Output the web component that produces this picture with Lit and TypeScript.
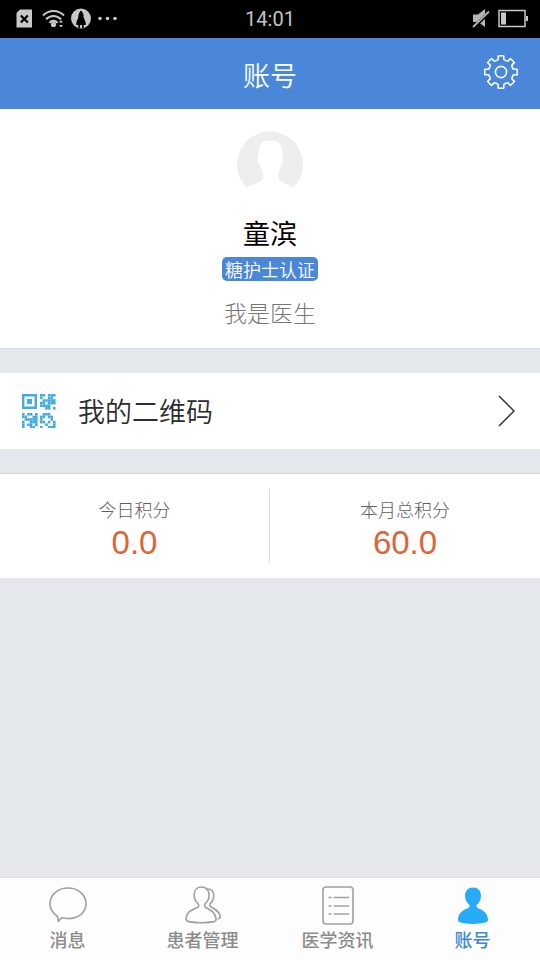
import { LitElement, html, css, svg } from "lit";
import { customElement, property } from "lit/decorators.js";
import { classMap } from "lit/directives/class-map.js";

function gearPath(cx: number, cy: number, teeth: number, outer: number, inner: number): string {
  const step = (Math.PI * 2) / teeth;
  const at = (r: number, a: number) =>
    `${(cx + r * Math.sin(a)).toFixed(2)} ${(cy - r * Math.cos(a)).toFixed(2)}`;
  let d = "";
  for (let i = 0; i < teeth; i++) {
    const a = i * step;
    d += `${i === 0 ? "M" : "L"}${at(inner, a - step * 0.28)}`;
    d += `L${at(outer, a - step * 0.22)}`;
    d += `A${outer} ${outer} 0 0 1 ${at(outer, a + step * 0.22)}`;
    d += `L${at(inner, a + step * 0.28)}`;
    d += `Q${at(inner - 1, a + step * 0.5)} ${at(inner, a + step * 0.72)}`;
  }
  return d + "Z";
}

const QR_BLOCKS = [
  { x: 18, y: 0, rows: ["11.111", "1..11.", ".11111", "11.111", "1111..", "..11.1"] },
  { x: 0, y: 19, rows: ["1.11.1", "11..11", ".11111", "1..111", "1.11.1", "1..11."] },
  { x: 18, y: 19, rows: [".111..", "11.11.", "1...1.", "11.1.1", "..1..1", "1..111"] },
];
const QR_CELL = 2.6;

const icons = {
  chat: svg`<path d="M8.5 30.500C4 27.500 1 22.800 1 17.800 1 8.800 8.800 2 19 2s18 6.800 18 15.800S29.200 32.500 19 32.500c-2.500 0-4.500-.3-6.300-.8L9.300 35.500Z"/>`,
  people: svg`<path d="M17.500 1c-4.500 0-7.300 3.200-7.300 7.800 0 4 1.500 7 3.800 8.800 1 .9 1 2.900-.2 3.600C8 24 2.500 25.500 2 32.500c-.1 1.800 1.200 2.700 3 3.100 7.500 1.400 17.500 1.400 25 0 1.800-.4 2.400-1.300 2-3.100-1.200-7-6-8.500-10.500-11.300-1.200-.7-1.200-2.700-.2-3.600 2.300-1.800 3.800-4.800 3.800-8.800C25.100 4.200 22 1 17.500 1Z"/><path d="M23.500 3c4 0 6.200 2.500 6.200 6.500 0 3.500-1.200 6-3.200 7.800-1 1-1 2.600.2 3.400 4.500 2.500 8.800 4.500 9.500 9.500.2 1.400-.6 2.300-2 2.500"/>`,
  list: svg`<rect x="4" y="1" width="30" height="37" rx="3"/><path d="M15.500 11.500h14M15.500 20h14M15.500 28h14M10 11.500h2M10 20h2M10 28h2"/>`,
  person: svg`<path class="solid" d="M19 1.500c-5 0-8 3.500-8 8.200 0 3.800 1.700 7 4 8.800.9.800.8 2.600-.3 3.200C9 24 4.500 26.500 4 33.500c0 1.500.6 2.400 2 2.800 7.500 2.200 18.500 2.200 26 0 1.400-.4 2-1.300 2-2.800-.5-7-5-9.500-10.700-11.800-1.100-.6-1.200-2.400-.3-3.200 2.300-1.800 4-5 4-8.800 0-4.700-3-8.200-8-8.200Z"/>`,
};

@customElement("status-bar")
class StatusBar extends LitElement {
  static styles = css`
    :host {
      display: grid;
      grid-template-columns: 1fr auto 1fr;
      align-items: center;
      height: 38px;
      background: #000;
      color: #c4c4c4;
      font: 20px/24px Roboto, sans-serif;
    }
    .left,
    .right {
      display: flex;
      align-items: center;
    }
    .left {
      padding-left: 16px;
    }
    .right {
      justify-content: flex-end;
      padding-right: 12px;
    }
    svg {
      display: block;
    }
  `;
  render() {
    return html`
      <div class="left">
        <svg width="104" height="24" viewBox="0 0 104 24" fill="none">
          <path d="M4 2.500h12v18H.5V6Z" fill="#c8c8c8" />
          <path d="m4.800 8.500 7 7m0-7-7 7" stroke="#000" stroke-width="2.200" />
          <g stroke="#c8c8c8" stroke-width="2">
            <path d="M27 8.500c6-6 15-6 21 0M30 12.300c4.500-4.400 10.500-4.400 15 0M33.300 15.800c2.500-2.300 5.800-2.300 8.300 0" />
          </g>
          <circle cx="37.500" cy="17.500" r="2.600" fill="#c8c8c8" />
          <path d="m45 13 2 2.500h-4ZM45 20.500l2-2.500h-4Z" fill="#c8c8c8" />
          <circle cx="65" cy="11.500" r="10" fill="#c8c8c8" />
          <path d="M65 3.500c2 2 2.800 4.300 2.700 7l2 5v2.500h-2v3h-1.700v-3h-2v3h-1.700v-3h-2V15.500l2-5c-.1-2.700.7-5 2.700-7Z" fill="#000" />
          <g fill="#c8c8c8">
            <circle cx="84" cy="11.500" r="1.800" />
            <circle cx="91.500" cy="11.500" r="1.800" />
            <circle cx="99" cy="11.500" r="1.800" />
          </g>
        </svg>
      </div>
      <time>14:01</time>
      <div class="right">
        <svg width="56" height="24" viewBox="0 0 56 24" fill="none">
          <path d="M1 7.500h5L13 2v18l-7-5H1Z" fill="#b4b4b4" />
          <path d="M1.500 20.500 17 5.500" stroke="#000" stroke-width="3.500" />
          <path d="M1 20 17 4.500" stroke="#b4b4b4" stroke-width="1.800" />
          <rect x="27" y="3.500" width="26" height="16" stroke="#c8c8c8" stroke-width="1.500" />
          <path d="M29 5.500h5v12h-5Z" fill="#c8c8c8" />
          <path d="M54 9h2v5h-2Z" fill="#c8c8c8" />
        </svg>
      </div>
    `;
  }
}

@customElement("tab-bar")
class TabBar extends LitElement {
  @property() current = "账号";

  static styles = css`
    :host {
      display: block;
      background: #fdfdfd;
      border-top: 1px solid #dcdfe2;
    }
    nav {
      display: grid;
      grid-template-columns: repeat(4, 1fr);
    }
    a {
      display: flex;
      flex-direction: column;
      align-items: center;
      padding: 8px 0;
      color: #8c8c8c;
      font-size: 18px;
      font-weight: 500;
      line-height: 26px;
      text-decoration: none;
    }
    a.active {
      color: #3f87cf;
    }
    svg {
      display: block;
      fill: none;
      stroke: #a0a0a0;
      stroke-width: 1.600;
      stroke-linecap: round;
      stroke-linejoin: round;
    }
    .solid {
      fill: #27abf8;
      stroke: none;
    }
  `;
  render() {
    const tabs = [
      { label: "消息", icon: icons.chat },
      { label: "患者管理", icon: icons.people },
      { label: "医学资讯", icon: icons.list },
      { label: "账号", icon: icons.person },
    ];
    return html`<nav>
      ${tabs.map(
        (t) => html`<a href="#" class=${classMap({ active: t.label === this.current })}>
          <svg width="38" height="40" viewBox="0 0 38 40" aria-hidden="true">${t.icon}</svg>
          <span>${t.label}</span>
        </a>`
      )}
    </nav>`;
  }
}

@customElement("app-root")
class AppRoot extends LitElement {
  static styles = css`
    :host {
      display: flex;
      flex-direction: column;
      min-height: 100vh;
      background: #e4e8ec;
      color: #2c2c2c;
      font-family: "Noto Sans CJK SC", sans-serif;
    }
    svg {
      display: block;
    }
    h1,
    h2,
    p,
    dl,
    dd {
      margin: 0;
      font-weight: 400;
    }
    header {
      display: grid;
      grid-template-columns: 1fr auto 1fr;
      align-items: center;
      height: 71px;
      background: #4a87d8;
      color: #fff;
    }
    h1 {
      grid-column: 2;
      padding-top: 2px;
      font-size: 27px;
      font-weight: 350;
      line-height: 40px;
    }
    button {
      border: 0;
      padding: 0;
      background: none;
      color: inherit;
      font: inherit;
      cursor: pointer;
    }
    .settings {
      justify-self: end;
      margin-right: 20px;
      padding-bottom: 3px;
    }
    main {
      flex: 1;
      display: flex;
      flex-direction: column;
      gap: 24px;
    }
    .profile {
      display: flex;
      flex-direction: column;
      align-items: center;
      padding: 20px 0;
      background: #fff;
      border-bottom: 1px solid #d6d9dc;
    }
    h2 {
      margin-top: 16px;
      font-size: 27px;
      line-height: 40px;
      color: #000;
    }
    .badge {
      margin-top: 4px;
      padding: 0 3px;
      border-radius: 5px;
      background: #4a87d8;
      color: #fff;
      font-size: 18px;
      font-weight: 350;
      line-height: 24px;
    }
    .role {
      margin-top: 15px;
      font-size: 23px;
      font-weight: 300;
      line-height: 32px;
      color: #787878;
    }
    .qr {
      display: flex;
      align-items: center;
      gap: 22px;
      width: 100%;
      padding: 18px 24px 18px 22px;
      background: #fff;
      font-size: 27px;
      font-weight: 350;
      line-height: 40px;
      text-align: left;
    }
    .qr span {
      flex: 1;
    }
    .points {
      display: grid;
      grid-template-columns: 1fr 1fr;
      padding: 15px 0;
      background: #fff;
      border-top: 1px solid #d6d9dc;
    }
    .points div {
      display: flex;
      flex-direction: column;
      align-items: center;
      padding-top: 7px;
    }
    .points div:first-child {
      border-right: 1px solid #dcdcdc;
    }
    dt {
      font-size: 18px;
      font-weight: 300;
      line-height: 26px;
      color: #606060;
    }
    dd {
      padding-top: 1px;
      font-family: "Liberation Sans", sans-serif;
      font-size: 33px;
      line-height: 40px;
      color: #dc6439;
    }
  `;
  render() {
    return html`
      <status-bar></status-bar>
      <header>
        <h1>账号</h1>
        <button class="settings" aria-label="设置">
          <svg width="38" height="38" viewBox="0 0 38 38" fill="none" stroke="#fff" stroke-width="1.600" stroke-linejoin="round">
            <path d=${gearPath(19, 19, 8, 16.3, 12.8)} />
            <circle cx="19" cy="19" r="5.600" />
          </svg>
        </button>
      </header>
      <main>
        <section class="profile">
          <svg width="68" height="68" viewBox="0 0 68 68" aria-hidden="true">
            <path
              fill="#eee"
              d="M11 59A33 33 0 1 1 57 59C54 56 47 54 44 51.500c-1.500-1.300-1.700-3-1.700-6.500 0-3 2.200-5 3-9.500 2-1 2.500-6 1-7.500C47 17 44 11.500 34.500 11.500S22 17 22.500 28c-1.500 1.500-1 6.500 1 7.500.8 4.500 4 6.500 4 9.500 0 3.500-.2 5.200-1.700 6.500C23 54 14 56 11 59Z"
            />
          </svg>
          <h2>童滨</h2>
          <span class="badge">糖护士认证</span>
          <p class="role">我是医生</p>
        </section>
        <button class="qr">
          <svg width="34" height="34" viewBox="0 0 34 34" fill="#41acdf" aria-hidden="true">
            <path d="M1.200 1.200h12.600v12.600H1.200Z" fill="none" stroke="#41acdf" stroke-width="2.400" />
            <path d="M5 5h5v5H5Z" />
            ${QR_BLOCKS.map((b) =>
              b.rows.map((row, y) =>
                [...row].map((c, x) =>
                  c === "1"
                    ? svg`<rect x=${b.x + x * QR_CELL} y=${b.y + y * QR_CELL} width=${QR_CELL} height=${QR_CELL} />`
                    : null
                )
              )
            )}
          </svg>
          <span>我的二维码</span>
          <svg width="20" height="34" viewBox="0 0 20 34" fill="none" stroke="#333" stroke-width="1.500" aria-hidden="true">
            <path d="m3 2 15 15L3 32" />
          </svg>
        </button>
        <dl class="points">
          <div><dt>今日积分</dt><dd>0.0</dd></div>
          <div><dt>本月总积分</dt><dd>60.0</dd></div>
        </dl>
      </main>
      <tab-bar></tab-bar>
    `;
  }
}
